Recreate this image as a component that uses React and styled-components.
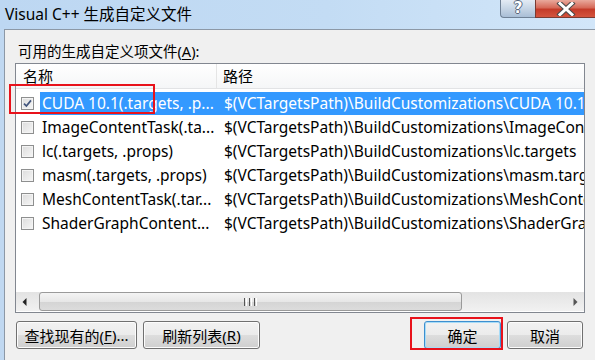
import React from 'react'
import styled, { createGlobalStyle } from 'styled-components'

const GlobalStyle = createGlobalStyle`
  html, body {
    margin: 0;
    padding: 0;
    background: #f0f0f0;
  }
  body {
    font-family: 'Noto Sans', 'Noto Sans CJK SC', sans-serif;
    color: #000;
  }
`

const rows = [
  {
    name: 'CUDA 10.1(.targets, .p...',
    path: '$(VCTargetsPath)\\BuildCustomizations\\CUDA 10.1.targets',
    checked: true,
    selected: true,
  },
  {
    name: 'ImageContentTask(.ta...',
    path: '$(VCTargetsPath)\\BuildCustomizations\\ImageContentTask.targets',
  },
  { name: 'lc(.targets, .props)', path: '$(VCTargetsPath)\\BuildCustomizations\\lc.targets' },
  { name: 'masm(.targets, .props)', path: '$(VCTargetsPath)\\BuildCustomizations\\masm.targets' },
  {
    name: 'MeshContentTask(.tar...',
    path: '$(VCTargetsPath)\\BuildCustomizations\\MeshContentTask.targets',
  },
  {
    name: 'ShaderGraphContent...',
    path: '$(VCTargetsPath)\\BuildCustomizations\\ShaderGraphContentTask.targets',
  },
]

const Check = ({ checked }) => (
  <CheckBox>
    {checked && (
      <svg width='11' height='11' viewBox='0 0 11 11'>
        <path d='M2 5.6 L4.4 8 L9 2.4' fill='none' stroke='#42557d' strokeWidth='1.7' />
      </svg>
    )}
  </CheckBox>
)

const App = () => {
  return (
    <Screen>
      <GlobalStyle />
      <TitleBar>
        <Title>Visual C++ 生成自定义文件</Title>
        <CaptionButtons>
          <HelpButton>?</HelpButton>
          <CloseButton>
            <svg width='22' height='14' viewBox='0 0 22 14'>
              <path
                d='M5 1.5 L17 12.5 M17 1.5 L5 12.5'
                stroke='#4a4a4a'
                strokeWidth='5'
                strokeLinecap='square'
              />
              <path
                d='M5 1.5 L17 12.5 M17 1.5 L5 12.5'
                stroke='#fff'
                strokeWidth='3'
                strokeLinecap='square'
              />
            </svg>
          </CloseButton>
        </CaptionButtons>
      </TitleBar>
      <Body>
        <SideFrame />
        <Content>
          <Label>
            可用的生成自定义项文件(<u>A</u>):
          </Label>
          <ListBox>
            <Header>
              <HeadName>名称</HeadName>
              <HeadPath>路径</HeadPath>
            </Header>
            <Rows>
              {rows.map((row) => (
                <Row key={row.name}>
                  <Check checked={row.checked} />
                  <RowText $selected={row.selected}>
                    <NameCell>{row.name}</NameCell>
                    <PathCell>{row.path}</PathCell>
                  </RowText>
                </Row>
              ))}
            </Rows>
            <ScrollBar>
              <Arrow>
                <svg width='5' height='8' viewBox='0 0 5 8'>
                  <path d='M4.5 0 L0.5 4 L4.5 8 Z' fill='#222' />
                </svg>
              </Arrow>
              <Track>
                <Thumb>
                  <Grip />
                  <Grip />
                  <Grip />
                </Thumb>
              </Track>
              <Arrow>
                <svg width='5' height='8' viewBox='0 0 5 8'>
                  <path d='M0.5 0 L4.5 4 L0.5 8 Z' fill='#555' />
                </svg>
              </Arrow>
            </ScrollBar>
          </ListBox>
          <ButtonRow>
            <ButtonGroup>
              <Button $width={121}>
                查找现有的(<u>F</u>)...
              </Button>
              <Button $width={117}>
                刷新列表(<u>R</u>)
              </Button>
            </ButtonGroup>
            <ButtonGroup>
              <Button $width={77} $default>
                确定
              </Button>
              <Button $width={76}>取消</Button>
            </ButtonGroup>
          </ButtonRow>
        </Content>
      </Body>
      <Marker style={{ left: 9, top: 84, width: 146, height: 30 }} />
      <Marker style={{ left: 410, top: 317, width: 93, height: 33 }} />
    </Screen>
  )
}

export default App

const Screen = styled.div`
  position: relative;
  width: 595px;
  height: 360px;
  overflow: hidden;
  display: flex;
  flex-direction: column;
  background: #f0f0f0;
`

const TitleBar = styled.div`
  height: 29px;
  flex-shrink: 0;
  display: flex;
  align-items: flex-start;
  justify-content: space-between;
  background: linear-gradient(to right, #bdd7f2 0%, #c3dcf4 55%, #d2e6f9 100%);
`

const Title = styled.div`
  padding: 4px 0 0 5px;
  font-size: 15.5px;
  line-height: 20px;
  color: #000;
  white-space: nowrap;
`

const CaptionButtons = styled.div`
  display: flex;
  height: 18px;
  flex-shrink: 0;
`

const HelpButton = styled.div`
  width: 34px;
  height: 17px;
  display: flex;
  align-items: center;
  justify-content: center;
  border: 1px solid #6f8196;
  border-top: none;
  border-right: none;
  border-radius: 0 0 0 4px;
  background: linear-gradient(#e3ebf4, #c6d5e5 50%, #a9bed6);
  font-family: 'DejaVu Sans', sans-serif;
  font-weight: bold;
  font-size: 15px;
  line-height: 1;
  color: #fff;
  text-shadow: -1px 0 #56657a, 1px 0 #56657a, 0 -1px #56657a, 0 1px #56657a;
`

const CloseButton = styled.div`
  width: 59px;
  height: 17px;
  display: flex;
  align-items: center;
  justify-content: center;
  border-left: 1px solid #7a3b32;
  border-bottom: 1px solid #7a3b32;
  background: linear-gradient(#e9a99c, #d66a59 45%, #c43b29 55%, #d4543e);
`

const Body = styled.div`
  flex: 1;
  display: flex;
  min-height: 0;
`

const SideFrame = styled.div`
  width: 4px;
  flex-shrink: 0;
  background: #c0d8f1;
`

const Content = styled.div`
  flex: 1;
  min-width: 0;
  overflow: hidden;
  border-left: 1px solid #8c98a6;
  border-top: 1px solid #8c98a6;
  padding: 10px 0 0 10px;
  display: flex;
  flex-direction: column;
`

const Label = styled.div`
  font-size: 14.5px;
  line-height: 22px;
  padding-left: 3px;
  margin-bottom: 1px;
  white-space: nowrap;
  u {
    text-decoration-thickness: 1px;
    text-underline-offset: 2px;
  }
`

const ListBox = styled.div`
  width: 570px;
  height: 250px;
  box-sizing: border-box;
  border: 1px solid #828790;
  background: #fff;
  display: flex;
  flex-direction: column;
  overflow: hidden;
`

const Header = styled.div`
  height: 24px;
  flex-shrink: 0;
  display: flex;
  background: linear-gradient(#ffffff, #f5f6f7);
  border-bottom: 1px solid #e2e3e5;
  font-size: 15px;
`

const HeadName = styled.div`
  width: 201px;
  padding-left: 7px;
  box-sizing: border-box;
  border-right: 1px solid #e5e5e5;
  line-height: 24px;
`

const HeadPath = styled.div`
  padding-left: 6px;
  line-height: 24px;
`

const Rows = styled.div`
  flex: 1;
  padding-top: 2px;
  min-height: 0;
  overflow: hidden;
`

const Row = styled.div`
  height: 24px;
  display: flex;
  align-items: center;
`

const CheckBox = styled.div`
  width: 13px;
  height: 13px;
  box-sizing: border-box;
  margin: 0 6px 0 5px;
  flex-shrink: 0;
  border: 1px solid #8e8f8f;
  background: linear-gradient(135deg, #dcdcdc, #f6f6f6);
  box-shadow: inset 0 0 0 1px #f4f4f4;
  display: flex;
  align-items: center;
  justify-content: center;
`

const RowText = styled.div`
  flex: 1;
  min-width: 0;
  height: 23px;
  display: flex;
  align-items: center;
  background: ${(p) => (p.$selected ? '#3399ff' : 'transparent')};
  color: ${(p) => (p.$selected ? '#fff' : '#000')};
  font-size: 15.5px;
  white-space: nowrap;
  overflow: hidden;
`

const NameCell = styled.div`
  width: 177px;
  flex-shrink: 0;
  padding-left: 2px;
  box-sizing: border-box;
  overflow: hidden;
`

const PathCell = styled.div`
  padding-left: 7px;
`

const ScrollBar = styled.div`
  height: 19px;
  flex-shrink: 0;
  display: flex;
  align-items: stretch;
  background: linear-gradient(#e3e3e3, #f1f1f1);
  margin-bottom: 1px;
`

const Arrow = styled.div`
  width: 17px;
  display: flex;
  align-items: center;
  justify-content: center;
`

const Track = styled.div`
  flex: 1;
  padding: 0 105px 0 6px;
  display: flex;
  align-items: stretch;
`

const Thumb = styled.div`
  flex: 1;
  border: 1px solid #9a9a9a;
  border-radius: 3px;
  background: linear-gradient(#f4f4f4, #e7e7e7 50%, #d4d4d4 51%, #dcdcdc);
  display: flex;
  align-items: center;
  justify-content: center;
  gap: 2px;
`

const Grip = styled.div`
  width: 1px;
  height: 8px;
  border-left: 1px solid #555;
  border-right: 1px solid #fff;
`

const ButtonRow = styled.div`
  width: 570px;
  margin-top: 8px;
  display: flex;
  justify-content: space-between;
`

const ButtonGroup = styled.div`
  display: flex;
  gap: 6px;
  padding: 0 2px 0 1px;
`

const Button = styled.div`
  width: ${(p) => p.$width}px;
  height: 28px;
  box-sizing: border-box;
  border: 1px solid ${(p) => (p.$default ? '#3d8fcf' : '#707070')};
  border-radius: 3px;
  box-shadow: inset 0 0 0 1px ${(p) => (p.$default ? '#a8dcf7' : '#fcfcfc')};
  background: linear-gradient(#f2f2f2, #ebebeb 50%, #dddddd 51%, #cfcfcf);
  display: flex;
  align-items: center;
  justify-content: center;
  font-size: 15px;
  white-space: nowrap;
  u {
    text-decoration-thickness: 1px;
    text-underline-offset: 2px;
  }
`

const Marker = styled.div`
  position: absolute;
  box-sizing: border-box;
  border: 2px solid #e8121b;
  pointer-events: none;
`
